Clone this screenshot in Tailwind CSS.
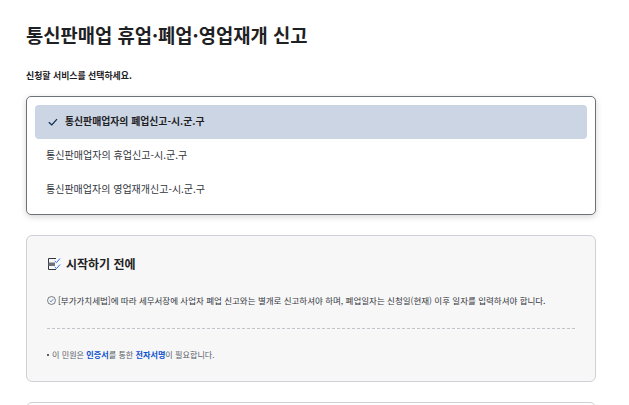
<!DOCTYPE html>
<html lang="ko"><head><meta charset="utf-8">
<script src="https://cdn.jsdelivr.net/npm/@tailwindcss/browser@4"></script>
</head>
<body class="bg-white overflow-hidden">
<div class="h-[405px] w-[629px] overflow-hidden pl-[26px] font-['Noto_Sans_CJK_KR','Noto_Sans',sans-serif] text-[#1e2124]">
  <h1 class="pt-[21px] text-[18.75px] leading-[27px] font-bold">통신판매업 휴업·폐업·영업재개 신고</h1>
  <p class="mt-[21px] text-[8.9px] leading-[14px] font-bold">신청할 서비스를 선택하세요.</p>
  <div class="mt-[13px] flex h-[119px] w-[570px] flex-col rounded-[5px] border border-[#6d7278] bg-white p-[8px] shadow-[0_2px_6px_rgba(0,0,0,0.16)]">
    <div class="flex h-[34px] items-center rounded-[4px] bg-[#ccd5e3] pb-[1px] pl-[13px] text-[9.85px] font-bold">
      <svg class="mr-[7px] h-[10px] w-[10px]" viewBox="0 0 10 10" fill="none" stroke="#052b57" stroke-width="1.2"><path d="M0.8 5.2 L3.8 8 L9 2.2"/></svg>
      통신판매업자의 폐업신고-시.군.구
    </div>
    <div class="flex h-[33px] items-center pb-[2px] pl-[11px] text-[10.05px] text-[#33363d]">통신판매업자의 휴업신고-시.군.구</div>
    <div class="flex h-[33px] items-center pl-[11px] text-[10px] text-[#33363d]">통신판매업자의 영업재개신고-시.군.구</div>
  </div>
  <div class="mt-[20px] h-[147px] w-[570px] rounded-[6px] border border-[#cdd1d5] bg-[#f7f7f7] px-[20px]">
    <div class="mt-[18px] flex h-[20px] items-center gap-[5px]">
      <svg class="h-[14px] w-[14px]" viewBox="0 0 14 14" fill="none" stroke="#33363d" stroke-width="1"><path d="M9 1.5H1.5V12.5H9"/><rect x="1.5" y="5.5" width="6.5" height="3.5" fill="#6d7278" stroke="none"/><path d="M7.8 4 L9.5 5.6 L13 1.5 M7.8 10 L9.5 11.6 L13 7.5" stroke="#256ef4"/></svg>
      <h2 class="text-[12px] font-bold">시작하기 전에</h2>
    </div>
    <div class="mt-[19px] flex h-[14px] items-center gap-[2px] text-[8.5px] text-[#33363d]">
      <svg class="h-[9px] w-[9px] shrink-0" viewBox="0 0 10 10" fill="none" stroke="#464c53" stroke-width="0.8"><circle cx="5" cy="5" r="4.4"/><path d="M3 5 L4.5 6.5 L7 3.5" stroke="#2a5bb8"/></svg>
      <span>[부가가치세법]에 따라 세무서장에 사업자 폐업 신고와는 별개로 신고하셔야 하며, 폐업일자는 신청일(현재) 이후 일자를 입력하셔야 합니다.</span>
    </div>
    <div class="mt-[21px] border-t border-dashed border-[#c0c4c9]"></div>
    <p class="mt-[19px] flex items-center text-[8.1px] leading-[14px] text-[#58616a]"><span class="mr-[3px] h-[2px] w-[2px] bg-[#58616a]"></span><span>이 민원은 <b class="font-bold text-[#0b50d0]">인증서</b>를 통한 <b class="font-bold text-[#0b50d0]">전자서명</b>이 필요합니다.</span></p>
  </div>
  <div class="mt-[20px] h-[60px] w-[570px] rounded-[6px] border border-[#cdd1d5] bg-white"></div>
</div>
</body></html>
